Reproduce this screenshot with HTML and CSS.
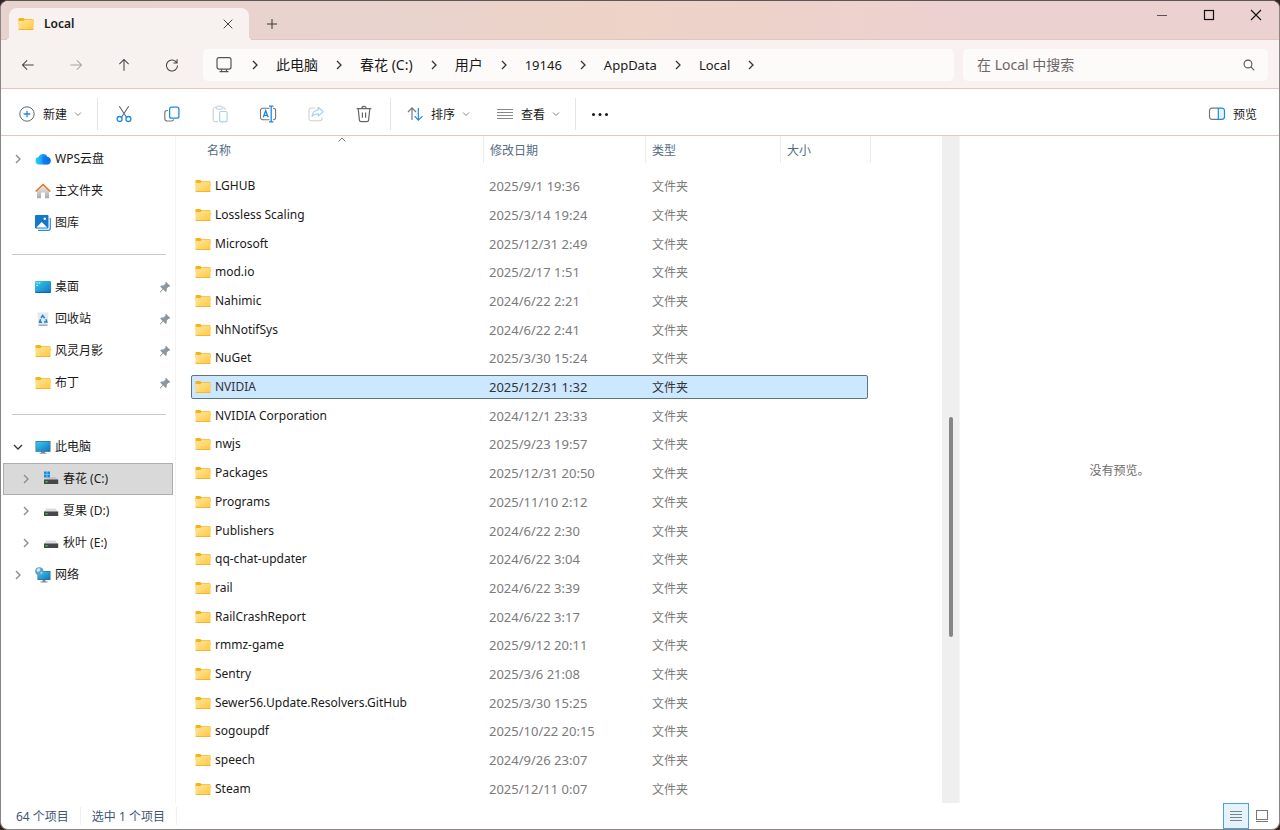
FILE: index.html
```html
<!DOCTYPE html>
<html lang="zh-CN">
<head>
  <meta charset="UTF-8" />
  <title>Local</title>
  <link rel="stylesheet" href="styles.css">
</head>
<body>

  <!-- Shared icons -->
  <svg class="sprite" width="0" height="0" aria-hidden="true">
    <defs>
      <linearGradient id="folder-fill" x1="0" y1="0" x2="1" y2="1">
        <stop offset="0" stop-color="#ffe6a0" />
        <stop offset="1" stop-color="#ffc83d" />
      </linearGradient>
      <linearGradient id="screen-fill" x1="0" y1="0" x2="1" y2="1">
        <stop offset="0" stop-color="#35d0e6" />
        <stop offset="1" stop-color="#1273c4" />
      </linearGradient>
      <linearGradient id="wall-fill" x1="0" y1="0" x2="0" y2="1">
        <stop offset="0" stop-color="#f0f0f0" />
        <stop offset="1" stop-color="#a9a9ab" />
      </linearGradient>
      <linearGradient id="cloud-fill" x1="0" y1="0" x2="1" y2="0">
        <stop offset="0" stop-color="#27d3f0" />
        <stop offset="1" stop-color="#0a62f5" />
      </linearGradient>
    </defs>
    <symbol id="folder" viewBox="0 0 16 16">
      <path d="M.5 2.800a.8.8 0 0 1 .8-.8h4l1.200 1.200h8.300a.7.7 0 0 1 .7.7V8H.5z" fill="#f5b21b" />
      <path d="M.5 5h5l1.300-1h8.700v9.200a.7.7 0 0 1-.7.7H1.200a.7.7 0 0 1-.7-.7z" fill="url(#folder-fill)" />
      <path d="M.7 13.500h14.600" stroke="#eeb02e" stroke-width=".8" />
    </symbol>
    <symbol id="chevron-right" viewBox="0 0 8 12">
      <path d="M2 2l4 4-4 4" fill="none" stroke="currentColor" stroke-width="1.3" />
    </symbol>
    <symbol id="chevron-down" viewBox="0 0 8 8">
      <path d="M1 2.500l3 3 3-3" fill="none" stroke="currentColor" />
    </symbol>
    <symbol id="pin" viewBox="0 0 12 12">
      <path d="M7 .8l4.200 4.200-1 .9-.7-.1-1.800 1.900v2.400l-1 .9-2.400-2.400-3 2.900-.6-.6L3.600 8 1.200 5.500l.9-.9h2.500L6.400 2.600 6.200 1.700z" fill="#8d979f" />
    </symbol>
    <symbol id="drive" viewBox="0 0 16 16">
      <path d="M3.300 5.500h9.400L15 9H1z" fill="#dcdde0" />
      <path d="M1 8.500h14.200V13H1z" fill="#45474b" />
      <path d="M2.500 10h2v1.500h-2z" fill="#35d04a" />
    </symbol>
    <symbol id="monitor" viewBox="0 0 16 16">
      <path d="M6 12.500h4v1.500H6z" fill="#7e8a92" />
      <path d="M.5 2h15v10.800H.5z" fill="#426a80" />
      <path d="M1.200 2.700h13.600v9.400H1.200z" fill="url(#screen-fill)" />
      <path d="M4.500 14.300h7" stroke="#8b979e" />
    </symbol>
  </svg>

  <div class="window">

    <header class="titlebar">
      <div class="tab">
        <svg class="icon-16"><use href="#folder" /></svg>
        <span class="tab-title">Local</span>
        <button class="tab-close" aria-label="关闭标签页">
          <svg width="10" height="10" viewBox="0 0 10 10"><path d="M.7.7l8.600 8.600M9.300.7L.7 9.300" stroke="#444" /></svg>
        </button>
      </div>
      <button class="new-tab" aria-label="新建标签页">
        <svg width="12" height="12" viewBox="0 0 12 12"><path d="M6 1v10M1 6h10" stroke="#333" /></svg>
      </button>
      <div class="window-controls">
        <button aria-label="最小化"><svg width="12" height="12" viewBox="0 0 12 12"><path d="M1 6.500h10" stroke="#555" /></svg></button>
        <button aria-label="最大化"><svg width="12" height="12" viewBox="0 0 12 12"><rect x="1.500" y="1.500" width="9" height="9" fill="none" stroke="#111" stroke-width="1.2" /></svg></button>
        <button aria-label="关闭"><svg width="12" height="12" viewBox="0 0 12 12"><path d="M1 1l10 10M11 1L1 11" stroke="#111" stroke-width="1.1" /></svg></button>
      </div>
    </header>

    <div class="navbar">
      <button class="nav-btn" aria-label="后退"><svg viewBox="0 0 16 16"><path d="M14.500 8H2M7 2.700L1.700 8 7 13.300" /></svg></button>
      <button class="nav-btn" aria-label="前进" disabled><svg viewBox="0 0 16 16"><path d="M1.500 8H14M9 2.700L14.300 8 9 13.300" /></svg></button>
      <button class="nav-btn" aria-label="向上"><svg viewBox="0 0 16 16"><path d="M8 14.500V2M2.700 7L8 1.700 13.300 7" /></svg></button>
      <button class="nav-btn" aria-label="刷新"><svg viewBox="0 0 16 16"><path d="M13.500 5.500A6.300 6.300 0 1 0 14.300 8.500M13.800 1.500v4.200H9.600" /></svg></button>

      <nav class="address" aria-label="地址">
        <a href="#" class="address-root" aria-label="此电脑">
          <svg width="18" height="18" viewBox="0 0 18 18" fill="none" stroke="#555" stroke-width="1.2"><rect x="2" y="1.600" width="14" height="11.500" rx="2" /><path d="M6.500 13v2.500M11.500 13v2.500M4.500 15.700h9" /></svg>
        </a>
        <svg class="crumb-sep"><use href="#chevron-right" /></svg>
        <a href="#">此电脑</a>
        <svg class="crumb-sep"><use href="#chevron-right" /></svg>
        <a href="#">春花 (C:)</a>
        <svg class="crumb-sep"><use href="#chevron-right" /></svg>
        <a href="#">用户</a>
        <svg class="crumb-sep"><use href="#chevron-right" /></svg>
        <a href="#" class="latin">19146</a>
        <svg class="crumb-sep"><use href="#chevron-right" /></svg>
        <a href="#" class="latin">AppData</a>
        <svg class="crumb-sep"><use href="#chevron-right" /></svg>
        <a href="#" class="latin">Local</a>
        <svg class="crumb-sep"><use href="#chevron-right" /></svg>
      </nav>

      <div class="search">
        <input type="text" placeholder="在 Local 中搜索" aria-label="在 Local 中搜索" />
        <svg width="12" height="12" viewBox="0 0 12 12" fill="none" stroke="#555" stroke-width="1.1"><circle cx="5" cy="5" r="3.900" /><path d="M7.800 7.800l3.500 3.500" /></svg>
      </div>
    </div>

    <div class="toolbar">
      <button class="tool-text">
        <svg width="18" height="18" viewBox="0 0 18 18" fill="none"><circle cx="9" cy="9" r="7.200" stroke="#666" /><path d="M9 5.700v6.600M5.700 9h6.600" stroke="#1b8ae6" stroke-width="1.3" /></svg>
        <span>新建</span>
        <svg class="caret"><use href="#chevron-down" /></svg>
      </button>
      <span class="separator"></span>
      <button class="tool" aria-label="剪切">
        <svg width="18" height="18" viewBox="0 0 18 18" fill="none"><path d="M4.300 1.300l7.200 11M13.700 1.300l-7.200 11" stroke="#666" stroke-width="1.1" /><circle cx="4.600" cy="14" r="2.500" stroke="#1b8ae6" stroke-width="1.3" /><circle cx="13.400" cy="14" r="2.500" stroke="#1b8ae6" stroke-width="1.3" /></svg>
      </button>
      <button class="tool" aria-label="复制">
        <svg width="18" height="18" viewBox="0 0 18 18" fill="none"><path d="M5 5.500H4a2.200 2.200 0 0 0-2.200 2.200v5.800A2.500 2.500 0 0 0 4.300 16h4.200a2.200 2.200 0 0 0 2.200-1.600" stroke="#777" stroke-width="1.2" /><rect x="6.600" y="2.200" width="9.300" height="11" rx="2" stroke="#1b8ae6" stroke-width="1.3" /></svg>
      </button>
      <button class="tool" aria-label="粘贴" disabled>
        <svg width="18" height="18" viewBox="0 0 18 18" fill="none"><path d="M5.500 2.700H3.700A1.500 1.500 0 0 0 2.200 4.200v11a1.500 1.500 0 0 0 1.500 1.500h3.500M11.500 2.700h1.300a1.500 1.500 0 0 1 1.500 1.500v.8" stroke="#c9c9c9" /><rect x="5.500" y="1.200" width="6" height="3" rx="1.300" stroke="#c9c9c9" /><rect x="8.600" y="6.500" width="7.500" height="10.300" rx="1.400" stroke="#a8d2f2" stroke-width="1.2" /></svg>
      </button>
      <button class="tool" aria-label="重命名">
        <svg width="18" height="18" viewBox="0 0 18 18" fill="none"><path d="M10.500 3.300H3.700a2.200 2.200 0 0 0-2.200 2.200v7a2.200 2.200 0 0 0 2.200 2.200h6.800M14 3.300h.4a2.200 2.200 0 0 1 2.200 2.200v7a2.200 2.200 0 0 1-2.200 2.200H14" stroke="#777" stroke-width="1.1" /><path d="M12.200 1.500v15M10 1.200h4.500M10 16.800h4.500M4.200 12.300l2.500-6.600 2.500 6.600M5 10.300h3.400" stroke="#1b8ae6" stroke-width="1.3" /></svg>
      </button>
      <button class="tool" aria-label="共享" disabled>
        <svg width="18" height="18" viewBox="0 0 18 18" fill="none"><path d="M8 3H4.200A2.200 2.200 0 0 0 2 5.200v8.300a2.200 2.200 0 0 0 2.200 2.200h8.600a2.200 2.200 0 0 0 2.200-2.200v-1" stroke="#cfcfcf" stroke-width="1.1" /><path d="M11.300 2.300l5 4.400-5 4.400V8.800c-3 0-4.700.8-6.200 2.700.4-3.700 2.500-6.200 6.200-6.600z" stroke="#a8d2f2" stroke-width="1.2" stroke-linejoin="round" /></svg>
      </button>
      <button class="tool" aria-label="删除">
        <svg width="18" height="18" viewBox="0 0 18 18" fill="none" stroke="#666" stroke-width="1.2"><path d="M1.700 3.700h14.600M6.800 3.500a2.200 2.200 0 0 1 4.400 0M3.200 3.800l1.200 11.300a1.800 1.800 0 0 0 1.800 1.600h5.600a1.800 1.800 0 0 0 1.800-1.600l1.200-11.300M7.400 7.500v5.300M10.600 7.500v5.300" /></svg>
      </button>
      <span class="separator"></span>
      <button class="tool-text">
        <svg width="18" height="18" viewBox="0 0 18 18" fill="none" stroke-width="1.2"><path d="M6 15V3M2 7l4-4.200L10 7" stroke="#777" /><path d="M12.300 3v12M8.600 11.200l3.700 3.900 4.200-4" stroke="#1b8ae6" /></svg>
        <span>排序</span>
        <svg class="caret"><use href="#chevron-down" /></svg>
      </button>
      <button class="tool-text">
        <svg width="18" height="18" viewBox="0 0 18 18"><path d="M1 4.500h16M1 7.500h16M1 10.500h16M1 13.500h16" stroke="#888" /></svg>
        <span>查看</span>
        <svg class="caret"><use href="#chevron-down" /></svg>
      </button>
      <span class="separator"></span>
      <button class="tool more" aria-label="更多">
        <svg width="18" height="18" viewBox="0 0 18 18" fill="#1a1a1a"><circle cx="2.500" cy="9.500" r="1.500" /><circle cx="9" cy="9.500" r="1.500" /><circle cx="15.500" cy="9.500" r="1.500" /></svg>
      </button>
      <button class="tool-text preview-toggle">
        <svg width="18" height="18" viewBox="0 0 18 18" fill="none" stroke-width="1.2"><path d="M10 3.200H4A2.500 2.500 0 0 0 1.500 5.700v6.100A2.500 2.500 0 0 0 4 14.300h6" stroke="#777" /><path d="M10.300 3.200h3.700a2.500 2.500 0 0 1 2.500 2.500v6.100a2.500 2.500 0 0 1-2.500 2.500h-3.700z" fill="#e5f3fd" stroke="#1b8ae6" /></svg>
        <span>预览</span>
      </button>
    </div>

    <main class="content">

      <!-- Navigation pane -->
      <nav class="sidebar" aria-label="导航窗格">
        <a href="#" class="side-item">
          <svg class="expander"><use href="#chevron-right" /></svg>
          <svg class="icon-16" viewBox="0 0 16 16"><path d="M4 13.500a3.800 3.800 0 0 1-.5-7.500A5 5 0 0 1 12.600 6a3.800 3.800 0 0 1-.4 7.500z" fill="url(#cloud-fill)" /><path d="M7 6.500A4.500 4.500 0 0 1 12.600 6a3.800 3.800 0 0 1-.4 7.500H8z" fill="#0b6cf2" opacity=".6" /></svg>
          WPS云盘
        </a>
        <a href="#" class="side-item">
          <span class="expander"></span>
          <svg class="icon-16" viewBox="0 0 16 16"><path d="M2 7.500L8 2l6 5.500v7.800h-4V9.500H6v5.800H2z" fill="url(#wall-fill)" /><path d="M.7 8.500L8 1.500l7.300 7" fill="none" stroke="#e07b2c" stroke-width="1.7" stroke-linejoin="round" /></svg>
          主文件夹
        </a>
        <a href="#" class="side-item">
          <span class="expander"></span>
          <svg class="icon-16" viewBox="0 0 16 16"><path d="M3 15.300h10.300a2 2 0 0 0 2-2V3" fill="none" stroke="#2b8bd6" stroke-width="1.2" /><rect width="13.500" height="13.500" rx="1" fill="#1478c8" /><path d="M1.300 12.500L6.700 7l5.600 5.500z" fill="#fff" /><circle cx="9.800" cy="3.700" r="1.200" fill="#fff" /></svg>
          图库
        </a>

        <hr class="side-divider">

        <a href="#" class="side-item">
          <span class="expander"></span>
          <svg class="icon-16" viewBox="0 0 16 16"><rect y="2" width="16" height="12" rx="1" fill="url(#screen-fill)" /><path d="M1.500 4h1.300M1.500 6.500h1.300M4 4h1.300" stroke="#fff" /><path d="M.5 13.400h15" stroke="#0f63a8" /></svg>
          桌面
          <svg class="pin"><use href="#pin" /></svg>
        </a>
        <a href="#" class="side-item">
          <span class="expander"></span>
          <svg class="icon-16" viewBox="0 0 16 16"><path d="M2.500 1.500h11l-1 13h-9z" fill="#e4e8eb" /><path d="M3.500 13.500h9v1.500h-9z" fill="#a8adb1" /><path d="M6 7l1.700-2.400 2 2.600M11 8.300l.8 2.700H9M7 11.200H4.600l1-3" fill="none" stroke="#1583d8" stroke-width="1.5" /></svg>
          回收站
          <svg class="pin"><use href="#pin" /></svg>
        </a>
        <a href="#" class="side-item">
          <span class="expander"></span>
          <svg class="icon-16"><use href="#folder" /></svg>
          风灵月影
          <svg class="pin"><use href="#pin" /></svg>
        </a>
        <a href="#" class="side-item">
          <span class="expander"></span>
          <svg class="icon-16"><use href="#folder" /></svg>
          布丁
          <svg class="pin"><use href="#pin" /></svg>
        </a>

        <hr class="side-divider">

        <a href="#" class="side-item">
          <svg class="expander open" viewBox="0 0 12 12"><path d="M2 4l4 4 4-4" fill="none" stroke="#333" stroke-width="1.3" /></svg>
          <svg class="icon-16"><use href="#monitor" /></svg>
          此电脑
        </a>
        <a href="#" class="side-item child selected">
          <svg class="expander"><use href="#chevron-right" /></svg>
          <svg class="icon-16" viewBox="0 0 16 16"><path d="M5 6h7.700L15 9H1z" fill="#c4c5c8" /><path d="M1 8.500h14.200V13H1z" fill="#45474b" /><path d="M2.500 10h2v1.500h-2z" fill="#35d04a" /><path d="M1 .5h2.700v2.700H1zM4.300.5H7v2.700H4.300zM1 3.800h2.700v2.700H1zM4.300 3.800H7v2.700H4.300z" fill="#0f8de0" /></svg>
          春花 (C:)
        </a>
        <a href="#" class="side-item child">
          <svg class="expander"><use href="#chevron-right" /></svg>
          <svg class="icon-16"><use href="#drive" /></svg>
          夏果 (D:)
        </a>
        <a href="#" class="side-item child">
          <svg class="expander"><use href="#chevron-right" /></svg>
          <svg class="icon-16"><use href="#drive" /></svg>
          秋叶 (E:)
        </a>
        <a href="#" class="side-item">
          <svg class="expander"><use href="#chevron-right" /></svg>
          <svg class="icon-16" viewBox="0 0 16 16"><path d="M2.500 4h13v9h-13z" fill="#426a80" /><path d="M3.200 4.700h11.600v7.600H3.200z" fill="url(#screen-fill)" /><path d="M7.500 13h3v1.500h-3zM5.500 14.500h7v1h-7z" fill="#7e8a92" /><circle cx="4.300" cy="4.300" r="4.100" fill="#5aa3cb" /><path d="M1.500 2.500l2.500-1.700 1.500 1.700-1.500 2.500-2-.5zM5.500 5l2 .3-1.500 2.300z" fill="#cfe4ef" /></svg>
          网络
        </a>
      </nav>

      <!-- File list -->
      <section class="file-pane">
        <svg class="sort-mark" viewBox="0 0 8 5"><path d="M.5 4.500L4 1l3.500 3.500" fill="none" stroke="#777" /></svg>
        <table class="files">
          <thead>
            <tr><th>名称</th><th>修改日期</th><th>类型</th><th>大小</th></tr>
          </thead>
          <tbody>
            <tr><td><svg class="icon-16"><use href="#folder" /></svg>LGHUB</td><td>2025/9/1 19:36</td><td>文件夹</td><td></td></tr>
            <tr><td><svg class="icon-16"><use href="#folder" /></svg>Lossless Scaling</td><td>2025/3/14 19:24</td><td>文件夹</td><td></td></tr>
            <tr><td><svg class="icon-16"><use href="#folder" /></svg>Microsoft</td><td>2025/12/31 2:49</td><td>文件夹</td><td></td></tr>
            <tr><td><svg class="icon-16"><use href="#folder" /></svg>mod.io</td><td>2025/2/17 1:51</td><td>文件夹</td><td></td></tr>
            <tr><td><svg class="icon-16"><use href="#folder" /></svg>Nahimic</td><td>2024/6/22 2:21</td><td>文件夹</td><td></td></tr>
            <tr><td><svg class="icon-16"><use href="#folder" /></svg>NhNotifSys</td><td>2024/6/22 2:41</td><td>文件夹</td><td></td></tr>
            <tr><td><svg class="icon-16"><use href="#folder" /></svg>NuGet</td><td>2025/3/30 15:24</td><td>文件夹</td><td></td></tr>
            <tr class="selected"><td><svg class="icon-16"><use href="#folder" /></svg>NVIDIA</td><td>2025/12/31 1:32</td><td>文件夹</td><td></td></tr>
            <tr><td><svg class="icon-16"><use href="#folder" /></svg>NVIDIA Corporation</td><td>2024/12/1 23:33</td><td>文件夹</td><td></td></tr>
            <tr><td><svg class="icon-16"><use href="#folder" /></svg>nwjs</td><td>2025/9/23 19:57</td><td>文件夹</td><td></td></tr>
            <tr><td><svg class="icon-16"><use href="#folder" /></svg>Packages</td><td>2025/12/31 20:50</td><td>文件夹</td><td></td></tr>
            <tr><td><svg class="icon-16"><use href="#folder" /></svg>Programs</td><td>2025/11/10 2:12</td><td>文件夹</td><td></td></tr>
            <tr><td><svg class="icon-16"><use href="#folder" /></svg>Publishers</td><td>2024/6/22 2:30</td><td>文件夹</td><td></td></tr>
            <tr><td><svg class="icon-16"><use href="#folder" /></svg>qq-chat-updater</td><td>2024/6/22 3:04</td><td>文件夹</td><td></td></tr>
            <tr><td><svg class="icon-16"><use href="#folder" /></svg>rail</td><td>2024/6/22 3:39</td><td>文件夹</td><td></td></tr>
            <tr><td><svg class="icon-16"><use href="#folder" /></svg>RailCrashReport</td><td>2024/6/22 3:17</td><td>文件夹</td><td></td></tr>
            <tr><td><svg class="icon-16"><use href="#folder" /></svg>rmmz-game</td><td>2025/9/12 20:11</td><td>文件夹</td><td></td></tr>
            <tr><td><svg class="icon-16"><use href="#folder" /></svg>Sentry</td><td>2025/3/6 21:08</td><td>文件夹</td><td></td></tr>
            <tr><td><svg class="icon-16"><use href="#folder" /></svg>Sewer56.Update.Resolvers.GitHub</td><td>2025/3/30 15:25</td><td>文件夹</td><td></td></tr>
            <tr><td><svg class="icon-16"><use href="#folder" /></svg>sogoupdf</td><td>2025/10/22 20:15</td><td>文件夹</td><td></td></tr>
            <tr><td><svg class="icon-16"><use href="#folder" /></svg>speech</td><td>2024/9/26 23:07</td><td>文件夹</td><td></td></tr>
            <tr><td><svg class="icon-16"><use href="#folder" /></svg>Steam</td><td>2025/12/11 0:07</td><td>文件夹</td><td></td></tr>
          </tbody>
        </table>
        <div class="scrollbar"><div class="thumb"></div></div>
      </section>

      <!-- Preview pane -->
      <aside class="preview">没有预览。</aside>
    </main>

    <footer class="statusbar">
      <span class="status">64 个项目</span>
      <span class="status">选中 1 个项目</span>
      <div class="view-modes">
        <button class="active" aria-label="详细信息"><svg width="14" height="14" viewBox="0 0 14 14"><path d="M1 2.500h12M1 5.500h12M1 8.500h12M1 11.500h12" stroke="#7b868d" /></svg></button>
        <button aria-label="大图标"><svg width="14" height="14" viewBox="0 0 14 14" fill="none" stroke="#777"><rect x="1.500" y="1.500" width="11" height="9" /><path d="M1 12.500h12" /></svg></button>
      </div>
    </footer>
  </div>

</body>
</html>
```

FILE: styles.css
```css
* {
  box-sizing: border-box;
}

body {
  margin: 0;
  background: #33231f;
  font-family: "Noto Sans", "Noto Sans CJK SC", sans-serif;
  font-size: 12px;
  line-height: 16px;
  color: #1a1a1a;
}

a {
  color: inherit;
  text-decoration: none;
}

button {
  display: flex;
  align-items: center;
  justify-content: center;
  padding: 0;
  border: none;
  background: none;
  font: inherit;
  color: inherit;
}

svg {
  flex-shrink: 0;
}

.sprite {
  position: absolute;
}

.icon-16 {
  width: 16px;
  height: 16px;
}

.window {
  display: flex;
  flex-direction: column;
  height: 100vh;
  border: 1px solid #8b8484;
  border-top-color: #5c5656;
  border-radius: 8px;
  overflow: hidden;
  background: #fff;
}

/* Title bar and tab */
.titlebar {
  display: flex;
  align-items: flex-end;
  height: 39px;
  padding-left: 8px;
  background: linear-gradient(90deg, #e8d2ce 0%, #e8d3ce 30%, #edd3c7 46%, #edd2cb 62%, #ecd1d1 75%, #ecd1d1 100%);
  box-shadow: inset 0 -1px #dfc6c0;
}

.tab {
  position: relative;
  display: flex;
  align-items: center;
  width: 240px;
  height: 32px;
  padding: 0 12px 0 9px;
  border-radius: 8px 8px 0 0;
  background: #f7f1ef;
}

.tab::before,
.tab::after {
  content: "";
  position: absolute;
  bottom: 0;
  width: 4px;
  height: 4px;
}

.tab::before {
  left: -4px;
  background: radial-gradient(circle at 0 0, transparent 4px, #f7f1ef 4px);
}

.tab::after {
  right: -4px;
  background: radial-gradient(circle at 100% 0, transparent 4px, #f7f1ef 4px);
}

.tab-title {
  margin-left: 10px;
  font-weight: 600;
}

.tab-close {
  width: 18px;
  height: 18px;
  margin-left: auto;
}

.new-tab {
  width: 32px;
  height: 32px;
  margin-left: 7px;
}

.window-controls {
  display: flex;
  align-self: flex-start;
  margin-left: auto;
}

.window-controls button {
  width: 47px;
  height: 28px;
}

/* Navigation bar */
.navbar {
  display: flex;
  align-items: center;
  height: 49px;
  padding: 2px 11px 0 3px;
  background: linear-gradient(90deg, #f7f1ef, #faf1f0);
  border-bottom: 1px solid #e2c7c3;
}

.nav-btn {
  width: 48px;
  height: 32px;
}

.nav-btn svg {
  width: 14px;
  height: 14px;
  fill: none;
  stroke: #444;
  stroke-width: 1.2;
}

.nav-btn:disabled svg {
  stroke: #aaa5a4;
}

.address {
  display: flex;
  flex: 1;
  align-items: center;
  gap: 18px;
  height: 32px;
  margin-left: 7px;
  padding-left: 10px;
  border-radius: 5px;
  background: #fdfafa;
  font-size: 14px;
}

.address-root {
  display: flex;
  padding: 0 1px 0 2px;
}

.address .latin {
  font-size: 13px;
}

.crumb-sep {
  width: 8px;
  height: 12px;
  margin: 0 -1px;
  color: #333;
}

.search {
  display: flex;
  align-items: center;
  width: 305px;
  height: 32px;
  margin-left: 9px;
  padding: 0 13px 0 14px;
  border-radius: 5px;
  background: #fdfafa;
}

.search input {
  flex: 1;
  min-width: 0;
  padding: 0;
  border: none;
  outline: none;
  background: none;
  font: inherit;
  font-size: 14px;
}

.search input::placeholder {
  color: #6b6868;
}

/* Command bar */
.toolbar {
  display: flex;
  align-items: center;
  height: 47px;
  padding: 3px 9px 0 4px;
  border-bottom: 1px solid #e2c7c3;
}

.tool {
  width: 48px;
  height: 32px;
}

.tool.more {
  width: 44px;
}

.tool-text {
  gap: 7px;
  height: 32px;
  padding: 0 13px;
}

.tool-text span {
  padding-top: 2px;
}

.caret {
  width: 8px;
  height: 8px;
  color: #888;
}

.separator {
  width: 1px;
  height: 32px;
  margin: 0 2px;
  background: #e5e5e5;
}

.preview-toggle {
  margin-left: auto;
}

/* Main area */
.content {
  display: grid;
  grid-template-columns: 175px 1fr 320px;
  flex: 1;
  min-height: 0;
}

.sidebar {
  padding: 7px 2px;
  border-right: 1px solid #f3f3f3;
}

.side-item {
  display: flex;
  align-items: center;
  height: 32px;
  padding: 0 1px 0 10px;
  border: 1px solid transparent;
}

.side-item.child {
  padding-left: 18px;
}

.side-item.selected {
  background: #d9d9d9;
  border-color: #adadad;
}

.side-item .icon-16 {
  margin-right: 4px;
}

.expander {
  width: 8px;
  height: 12px;
  margin-right: 13px;
  color: #8a8a8a;
}

.expander.open {
  width: 12px;
  margin: 0 11px 0 -2px;
}

.pin {
  width: 12px;
  height: 12px;
  margin-left: auto;
}

.side-divider {
  height: 1px;
  margin: 15px 7px 16px 9px;
  border: none;
  background: #c8c8c8;
}

.file-pane {
  position: relative;
  display: flex;
  justify-content: space-between;
  min-height: 0;
  padding-left: 15px;
}

.files {
  display: flex;
  flex-direction: column;
}

.files tr {
  display: grid;
  grid-template-columns: 293px 162px 135px 90px;
}

.files th {
  padding: 7px 0 4px 6px;
  border-right: 1px solid #ececec;
  font-weight: normal;
  text-align: left;
  color: #566b85;
}

.files th:first-child {
  padding-left: 16px;
}

.files tbody {
  display: grid;
  flex: 1;
  grid-auto-rows: 1fr;
  gap: 4px;
  padding: 11px 3px 2px 0;
}

.files tbody tr {
  grid-template-columns: 292px 162px 135px 1fr;
  align-items: center;
  border: 1px solid transparent;
}

.files td {
  padding: 2px 0 0 6px;
  color: #7b7b7b;
}

.files td:first-child {
  display: flex;
  align-items: center;
  gap: 4px;
  padding: 0 0 0 3px;
  color: #1a1a1a;
}

.files td:nth-child(2) {
  padding: 0 0 0 5px;
  font-size: 13px;
}

.files tbody tr.selected {
  background: #cce8ff;
  border-color: #5f7482;
  border-radius: 2px;
}

.files .selected td {
  color: #333;
}

.sort-mark {
  position: absolute;
  top: 1px;
  left: 162px;
  width: 8px;
  height: 5px;
}

.scrollbar {
  display: flex;
  flex-direction: column;
  align-items: center;
  width: 17px;
  background: #efefef;
}

.thumb {
  width: 4px;
  height: 33%;
  margin-top: 281px;
  border-radius: 2px;
  background: #868686;
}

.preview {
  display: flex;
  align-items: center;
  justify-content: center;
  padding-top: 2px;
  border-left: 1px solid #f5f5f5;
  color: #6d6d6d;
}

/* Status bar */
.statusbar {
  display: flex;
  align-items: center;
  height: 26px;
  padding: 0 4px;
  color: #3f5675;
}

.status {
  padding: 2px 11px 0;
  border-right: 1px solid #f0f0f0;
}

.view-modes {
  display: flex;
  margin-left: auto;
}

.view-modes button {
  width: 26px;
  height: 26px;
}

.view-modes .active {
  background: #e5f3fb;
  border: 1px solid #4aa0e0;
}
```
